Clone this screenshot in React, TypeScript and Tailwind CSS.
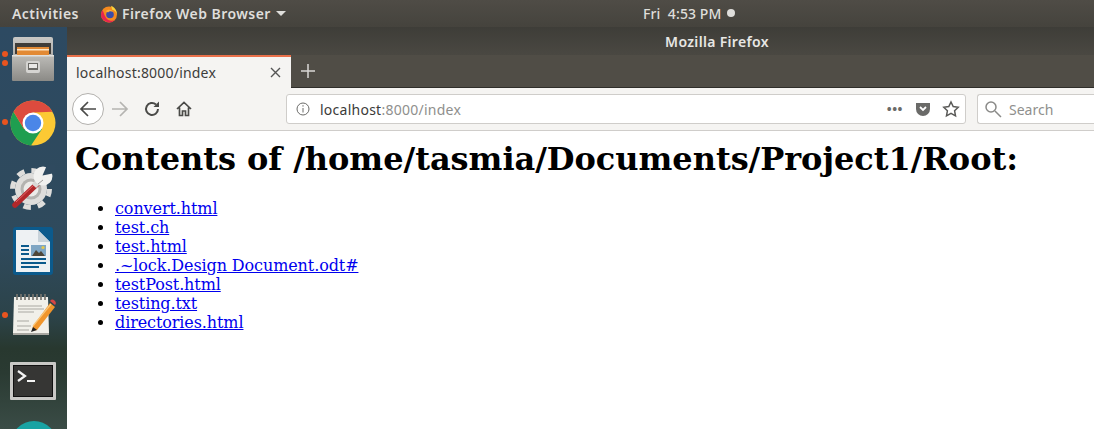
const LINKS = [
  "convert.html",
  "test.ch",
  "test.html",
  ".~lock.Design Document.odt#",
  "testPost.html",
  "testing.txt",
  "directories.html",
];

function Dot({ className }: { className: string }) {
  return <span className={"absolute left-[2px] w-[6px] h-[6px] rounded-full bg-[#e9541f] " + className} />;
}

function FirefoxLogo() {
  return (
    <svg width="18" height="18" viewBox="0 0 18 18">
      <circle cx="9" cy="9.5" r="8" fill="#f58a1f" />
      <path d="M1.2 8a8 8 0 0 0 14 6.5c-3 2-7 1.5-9-1.5C4.500 11 4 8 2.500 5z" fill="#e6254f" />
      <path d="M11 .8c3 1 6 4.500 6 8.700-1-2.500-2.500-4.500-5-5 0-1.500-.5-2.500-1-3.700z" fill="#fcd33a" />
      <circle cx="10" cy="9.500" r="3.800" fill="#3b4ca8" />
      <path d="M5.500 6.500c2-2.500 6-2.500 7.500.5-2-1-4-.8-5 .5-.8-.8-1.500-1-2.500-1z" fill="#fbb03b" />
    </svg>
  );
}

function FilesIcon() {
  return (
    <svg width="42" height="44" viewBox="0 0 42 44">
      <defs>
        <linearGradient id="cabinet-top" x1="0" y1="0" x2="0" y2="1">
          <stop offset="0" stopColor="#c9c8c5" />
          <stop offset="1" stopColor="#8d8c88" />
        </linearGradient>
        <linearGradient id="cabinet-front" x1="0" y1="0" x2="0" y2="1">
          <stop offset="0" stopColor="#bdbcb8" />
          <stop offset="1" stopColor="#8b8a86" />
        </linearGradient>
      </defs>
      <rect x="1" y="0" width="40" height="43" rx="2" fill="url(#cabinet-top)" />
      <rect x="3" y="6" width="36" height="11" fill="#3f3c38" />
      <rect x="5" y="10" width="32" height="9" fill="#e28a35" />
      <rect x="5" y="12" width="32" height="1.500" fill="#fbe6c6" />
      <rect x="0" y="18" width="42" height="26" rx="1" fill="url(#cabinet-front)" />
      <rect x="0" y="18" width="42" height="1.500" fill="#e2e1de" />
      <rect x="14" y="24" width="14" height="12" rx="2" fill="#d5d4d1" />
      <rect x="16" y="26" width="10" height="7" fill="#6b6a66" />
      <rect x="17" y="27" width="8" height="4" fill="#e9e8e6" />
    </svg>
  );
}

function ChromeIcon() {
  return (
    <svg width="46" height="46" viewBox="0 0 46 46">
      <circle cx="23" cy="23" r="22.500" fill="#fcc934" />
      <path d="M3.500 11.700 14 29h18L21 45.400A22.500 22.500 0 0 1 3.500 11.700z" fill="#1f9e50" />
      <path d="M3.500 11.700A22.500 22.500 0 0 1 42.500 11.700L23 12.500 14 29z" fill="#dd4b3e" />
      <circle cx="23" cy="23" r="10.500" fill="#fff" />
      <circle cx="23" cy="23" r="8.200" fill="#4a86e8" />
    </svg>
  );
}

function ToolsIcon() {
  return (
    <svg width="46" height="46" viewBox="0 0 46 46">
      <circle cx="21" cy="25" r="16" fill="#dedddb" />
      <circle cx="21" cy="25" r="18.500" fill="none" stroke="#dedddb" strokeWidth="5" strokeDasharray="7.500 7" />
      <circle cx="21" cy="25" r="10.500" fill="#b4b3b0" />
      <circle cx="21" cy="25" r="7.500" fill="#ecebe9" />
      <path d="M5 41 27 20" stroke="#b3272a" strokeWidth="5.500" strokeLinecap="round" />
      <path d="M6 38 26 19" stroke="#e0666a" strokeWidth="1" />
      <path d="M24 22 31 15" stroke="#d9d8d6" strokeWidth="6" />
      <circle cx="33" cy="12" r="9.500" fill="#f1f1ef" />
      <path d="M32.500 11.500 37 1h8v8z" fill="#2f4a5f" />
      <path d="M28 20l5-4" stroke="#9e9d9a" strokeWidth="1" />
    </svg>
  );
}

function WriterIcon() {
  return (
    <svg width="40" height="48" viewBox="0 0 40 48">
      <rect x="0" y="0" width="40" height="48" rx="3" fill="#0b5a8c" />
      <path d="M3 3h22l12 12v30H3z" fill="#eef1f3" />
      <path d="M27 2h10v10z" fill="#0b5a8c" />
      <path d="M25 3l12 12H25z" fill="#c9d3da" />
      <rect x="18" y="18" width="15" height="11" fill="#7fa6c4" />
      <circle cx="30" cy="20.500" r="1.600" fill="#e6c84a" />
      <path d="M19 29l4-6 3 3 2-2 4 5z" fill="#4f4638" />
      <rect x="8" y="18" width="8" height="2" fill="#0b5a8c" />
      <rect x="8" y="22" width="8" height="2" fill="#0b5a8c" />
      <rect x="8" y="26" width="8" height="2" fill="#0b5a8c" />
      <rect x="8" y="31" width="25" height="2" fill="#0b5a8c" />
      <rect x="8" y="35" width="25" height="2" fill="#0b5a8c" />
      <rect x="8" y="39" width="18" height="2" fill="#0b5a8c" />
    </svg>
  );
}

function NotesIcon() {
  return (
    <svg width="44" height="42" viewBox="0 0 44 42">
      <path d="M2 3h34l1 36H1z" fill="#f1f0ea" />
      <path d="M1 39h36v2H1z" fill="#a8a7a1" />
      <path d="M5 0v6M9 0v6M13 0v6M17 0v6M21 0v6M25 0v6M29 0v6M33 0v6" stroke="#77756f" strokeWidth="1.700" />
      <path d="M6 12h24M6 15h26M6 18h16M5 27h12M5 32h14M5 36h12" stroke="#a9a8a2" strokeWidth="1.200" />
      <path d="M21 32 38 9l5 4-18 23-5 1z" fill="#f0952b" />
      <path d="M21 32 39 10" stroke="#f9c67a" strokeWidth="1.200" />
      <path d="M38 7a3 3 0 0 1 5 4z" fill="#d64545" />
      <path d="M21 33l4 3-6 2z" fill="#222" />
    </svg>
  );
}

function TerminalIcon() {
  return (
    <svg width="46" height="38" viewBox="0 0 46 38">
      <rect x="0" y="0" width="46" height="38" rx="1" fill="#c9c9c6" />
      <rect x="3" y="3" width="40" height="32" fill="#111" />
      <rect x="4" y="4" width="38" height="30" fill="#363634" />
      <path d="M8 9l7 5-7 5" fill="none" stroke="#f4f4f4" strokeWidth="2.200" />
      <rect x="17" y="18" width="8" height="2" fill="#f4f4f4" />
    </svg>
  );
}

function Dock() {
  return (
    <div className="w-[67px] shrink-0 h-[402px] overflow-hidden flex flex-col items-center bg-[linear-gradient(180deg,#2d4a62_0%,#2f4a5c_55%,#2c4349_72%,#28382f_80%,#2a3a32_86%,#3a4c46_100%)]">
      <div className="relative w-full h-[65px] -mt-[1px] shrink-0 flex items-center justify-center pr-[1px]">
        <Dot className="top-[25px]" />
        <Dot className="top-[34px]" />
        <FilesIcon />
      </div>
      <div className="relative w-full h-[65px] -mt-[1px] shrink-0 flex items-center justify-center pr-[2px]">
        <Dot className="top-[29px]" />
        <ChromeIcon />
      </div>
      <div className="w-full h-[64px] shrink-0 flex items-center justify-center pr-[2px]">
        <ToolsIcon />
      </div>
      <div className="w-full h-[64px] shrink-0 flex items-center justify-center pr-[1px]">
        <WriterIcon />
      </div>
      <div className="relative w-full h-[64px] shrink-0 flex items-center justify-center">
        <Dot className="top-[29px]" />
        <NotesIcon />
      </div>
      <div className="w-full h-[68px] shrink-0 flex items-center justify-center pr-[1px]">
        <TerminalIcon />
      </div>
      <div className="mt-[6px] w-[46px] h-[46px] shrink-0 rounded-full bg-[#19a3a3]" />
    </div>
  );
}

function NavBar() {
  return (
    <div className="h-[43px] bg-[#f5f4f2] border-b border-[#cfcdca] flex items-center pl-[5px] text-[#4a4a48]">
      <div className="w-[32px] h-[32px] rounded-full border border-[#b3b1ae] bg-white flex items-center justify-center">
        <svg width="18" height="18" viewBox="0 0 18 18" fill="none" stroke="#4a4a48" strokeWidth="1.700">
          <path d="M17 9H2M9 2 2 9l7 7" />
        </svg>
      </div>
      <svg className="ml-[7px]" width="18" height="18" viewBox="0 0 18 18" fill="none" stroke="#b5b4b1" strokeWidth="1.700">
        <path d="M1 9h15M9 2l7 7-7 7" />
      </svg>
      <svg className="ml-[15px]" width="16" height="16" viewBox="0 0 16 16" fill="none" stroke="#4a4a48" strokeWidth="2">
        <path d="M14 8a6 6 0 1 1-2-4.500" />
        <path d="M15 .5v5.500H9.500" fill="#4a4a48" stroke="none" />
      </svg>
      <svg className="ml-[16px]" width="16" height="16" viewBox="0 0 16 16" fill="none" stroke="#4a4a48" strokeWidth="1.700">
        <path d="M1 8l7-6.500L15 8M3.500 6.500V14.500h3V10h3v4.500h3V6.500" />
      </svg>
      <div className="ml-[94px] w-[680px] shrink-0 h-[30px] rounded-[3px] border border-[#cfcdca] bg-white flex items-center">
        <svg className="ml-[9px]" width="14" height="14" viewBox="0 0 14 14" fill="none" stroke="#6a6a68">
          <circle cx="7" cy="7" r="6" />
          <path d="M7 6v4.500M7 3.200v1.400" />
        </svg>
        <span className="ml-[10px] text-[14px] tracking-[0.25px] text-[#3b3b39] font-['Noto_Sans',sans-serif]">
          localhost<span className="text-[#8f8f8d]">:8000/index</span>
        </span>
        <span className="ml-auto text-[13px] font-bold tracking-[0.5px] leading-none text-[#6a6a68]">•••</span>
        <svg className="ml-[12px]" width="16" height="16" viewBox="0 0 16 16">
          <path d="M1 2h14v6a7 7 0 0 1-14 0z" fill="#6a6a68" />
          <path d="M5 6l3 3 3-3" fill="none" stroke="#fff" strokeWidth="1.800" />
        </svg>
        <svg className="ml-[11px] mr-[5px]" width="18" height="18" viewBox="0 0 18 18" fill="none" stroke="#5a5a58" strokeWidth="1.500">
          <path d="M9 2l2.200 4.600 5 .7-3.600 3.500.9 5L9 13.400 4.500 15.800l.9-5L1.800 7.300l5-.7z" />
        </svg>
      </div>
      <div className="ml-[11px] flex-1 h-[30px] rounded-l-[3px] border border-r-0 border-[#cfcdca] bg-white flex items-center pl-[6px]">
        <svg width="18" height="18" viewBox="0 0 18 18" fill="none" stroke="#8a8a88" strokeWidth="1.500">
          <circle cx="7" cy="7" r="5" />
          <path d="M11 11l6 6" />
        </svg>
        <span className="ml-[7px] text-[14px] text-[#8f8f8d] font-['Noto_Sans',sans-serif]">Search</span>
      </div>
    </div>
  );
}

export default function App() {
  return (
    <div className="w-[1094px] h-[429px] overflow-hidden flex flex-col bg-white font-['Noto_Sans',sans-serif]">
      <div className="relative h-[27px] shrink-0 flex items-center bg-[linear-gradient(180deg,#4f4c46,#45433d)] text-[#dfdedb] text-[14px] font-semibold tracking-[0.45px]">
        <span className="ml-[12px]">Activities</span>
        <span className="ml-[21px] flex items-center">
          <FirefoxLogo />
        </span>
        <span className="ml-[4px]">Firefox Web Browser</span>
        <span className="ml-[5px] w-0 h-0 border-x-[5px] border-x-transparent border-t-[5px] border-t-[#dfdedb]" />
        <span className="absolute left-[643px] top-[3px] font-medium tracking-[0.1px] whitespace-pre">Fri  4:53 PM</span>
        <span className="absolute left-[727px] top-[9px] w-[8px] h-[8px] rounded-full bg-[#dfdedb]" />
      </div>
      <div className="flex flex-1 min-h-0">
        <Dock />
        <div className="flex-1 min-w-0 flex flex-col">
          <div className="h-[28px] shrink-0 flex items-center justify-center bg-[linear-gradient(180deg,#3e3d38,#4a4842)] text-[#e8e7e4] text-[14px] tracking-[0.33px] font-semibold pl-[273px]">
            <span>Mozilla Firefox</span>
          </div>
          <div className="h-[33px] shrink-0 flex bg-[#504d46] border-b border-[#2f2e2a]">
            <div className="w-[224px] h-[33px] shrink-0 border-t-2 border-[#e9704a] bg-[#f5f4f2] flex items-center pl-[9px] pr-[10px] text-[14px] tracking-[0.2px] text-[#3d3d3b]">
              <span>localhost:8000/index</span>
              <svg className="ml-auto" width="11" height="11" viewBox="0 0 11 11" stroke="#555" strokeWidth="1.400">
                <path d="M1 1l9 9M10 1l-9 9" />
              </svg>
            </div>
            <svg className="ml-[10px] mt-[9px]" width="14" height="14" viewBox="0 0 14 14" stroke="#d9d8d5" strokeWidth="1.500">
              <path d="M7 0v14M0 7h14" />
            </svg>
          </div>
          <NavBar />
          <div className="flex-1 pl-[8px] bg-white text-black font-['DejaVu_Serif',serif]">
            <h1 className="mt-[9px] text-[32px] leading-[38px] font-bold tracking-[-0.04px] whitespace-nowrap">
              Contents of /home/tasmia/Documents/Project1/Root:
            </h1>
            <ul className="mt-[21px] pl-[40px] list-disc text-[16px] leading-[19px] tracking-[-0.1px]">
              {LINKS.map((link) => (
                <li key={link}>
                  <a href="#" className="text-[#0000ee] underline">
                    {link}
                  </a>
                </li>
              ))}
            </ul>
          </div>
        </div>
      </div>
    </div>
  );
}
